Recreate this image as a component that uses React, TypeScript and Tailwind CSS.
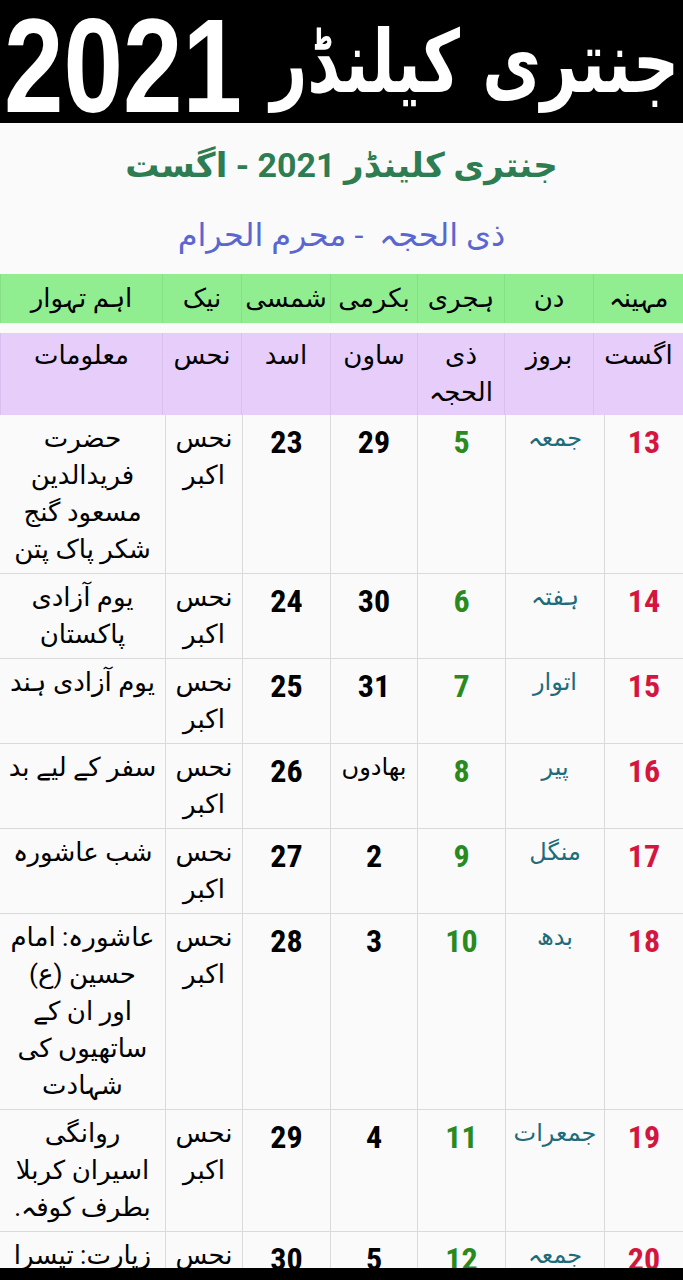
import React from "react";

type Row = {
  d: string;
  day: string;
  h: string;
  b: string;
  bText?: boolean;
  s: string;
  n: string[];
  info: string[];
};

const rows: Row[] = [
  { d: "13", day: "جمعہ", h: "5", b: "29", s: "23", n: ["نحس", "اکبر"], info: ["حضرت", "فریدالدین", "مسعود گنج", "شکر پاک پتن"] },
  { d: "14", day: "ہفتہ", h: "6", b: "30", s: "24", n: ["نحس", "اکبر"], info: ["یوم آزادی", "پاکستان"] },
  { d: "15", day: "اتوار", h: "7", b: "31", s: "25", n: ["نحس", "اکبر"], info: ["یوم آزادی ہند"] },
  { d: "16", day: "پیر", h: "8", b: "بھادوں", bText: true, s: "26", n: ["نحس", "اکبر"], info: ["سفر کے لیے بد"] },
  { d: "17", day: "منگل", h: "9", b: "2", s: "27", n: ["نحس", "اکبر"], info: ["شب عاشورہ"] },
  { d: "18", day: "بدھ", h: "10", b: "3", s: "28", n: ["نحس", "اکبر"], info: ["عاشورہ: امام", "حسین (ع)", "اور ان کے", "ساتھیوں کی", "شہادت"] },
  { d: "19", day: "جمعرات", h: "11", b: "4", s: "29", n: ["نحس", "اکبر"], info: ["روانگی", "اسیران کربلا", "بطرف کوفہ."] },
  { d: "20", day: "جمعہ", h: "12", b: "5", s: "30", n: ["نحس", "اکبر"], info: ["زیارت: تیسرا", "دن"] },
];

const urdu = "font-['Roboto','DejaVu_Sans',sans-serif]";
const num = "font-['Liberation_Sans_Narrow','Roboto_Condensed','Roboto',sans-serif] font-bold";
const cell = "border-l border-[#dadada] py-[5px] text-center leading-[37px]";
const numCell = "border-l border-[#dadada] pt-[9px] pb-[5px] text-center leading-[37px]";

export default function App() {
  return (
    <div className="w-[683px] h-[1280px] overflow-hidden flex flex-col bg-[#fafafa]">
      <header dir="ltr" className="h-[123px] shrink-0 bg-black flex items-center overflow-hidden pl-[4px] pr-[4px]">
        <span className="inline-block shrink-0 scale-y-[1.25] whitespace-nowrap text-white font-['Liberation_Sans',sans-serif] font-bold text-[107px] leading-none mt-[10px]">
          2021
        </span>
        <div className="flex-1 min-w-0 flex justify-end">
          <span dir="rtl" className="inline-block origin-right scale-y-[1.35] whitespace-nowrap text-white font-['DejaVu_Sans',sans-serif] font-bold text-[64px] leading-none">
            جنتری کیلنڈر
          </span>
        </div>
      </header>

      <main dir="rtl" className={`flex-1 overflow-hidden ${urdu}`}>
        <h1 className="mt-[18px] text-center text-[34px] leading-[48px] font-bold text-[#2e7d52]">
          جنتری کلینڈر 2021 - اگست
        </h1>
        <h2 className="mt-[24px] text-center text-[32px] leading-[44px] text-[#5a67d0]">
          ذی الحجہ&nbsp; - محرم الحرام
        </h2>

        <div className="mt-[17px] grid grid-cols-[90px_89px_87px_87px_89px_79px_1fr] bg-[#90ee90] text-[26px] text-black">
          {["مہینہ", "دن", "ہجری", "بکرمی", "شمسی", "نیک", "اہم تہوار"].map((t, i) => (
            <div key={i} className="border-l border-[#86e086] py-[6px] text-center leading-[37px] whitespace-nowrap">
              {t}
            </div>
          ))}
        </div>

        <div className="mt-[10px] grid grid-cols-[90px_89px_87px_87px_89px_79px_1fr] bg-[#e6cdfa] text-[26px] text-black">
          {[["اگست"], ["بروز"], ["ذی", "الحجہ"], ["ساون"], ["اسد"], ["نحس"], ["معلومات"]].map((t, i) => (
            <div key={i} className="border-l border-[#d9c0ee] py-[4px] text-center leading-[37px]">
              {t.map((l, j) => (
                <div key={j}>{l}</div>
              ))}
            </div>
          ))}
        </div>

        {rows.map((r) => (
          <div key={r.d} className="grid grid-cols-[79px_99px_88px_87px_88px_77px_1fr] border-b border-[#dadada]">
            <div className={`${numCell} ${num} text-[32px] text-[#d4163f]`}>{r.d}</div>
            <div className={`${cell} text-[24px] text-[#1e6b7b]`}>{r.day}</div>
            <div className={`${numCell} ${num} text-[32px] text-[#2a8a1e]`}>{r.h}</div>
            {r.bText ? (
              <div className={`${cell} text-[24px] text-black`}>{r.b}</div>
            ) : (
              <div className={`${numCell} ${num} text-[32px] text-black`}>{r.b}</div>
            )}
            <div className={`${numCell} ${num} text-[32px] text-black`}>{r.s}</div>
            <div className={`${cell} text-[26px] text-black`}>
              {r.n.map((l, j) => (
                <div key={j}>{l}</div>
              ))}
            </div>
            <div className="py-[5px] text-center leading-[37px] text-[26px] text-black whitespace-nowrap">
              {r.info.map((l, j) => (
                <div key={j}>{l}</div>
              ))}
            </div>
          </div>
        ))}
      </main>

      <div className="h-[12px] shrink-0 bg-black" />
    </div>
  );
}
